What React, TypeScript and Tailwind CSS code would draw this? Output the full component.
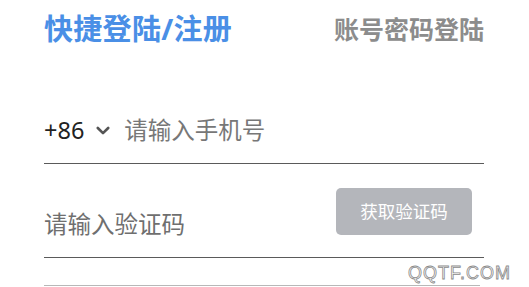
import React from 'react';

const font = 'font-["Noto_Sans","Noto_Sans_CJK_SC",sans-serif]';

function Chevron() {
  return (
    <svg width="14" height="10" viewBox="0 0 14 10" className="ml-[12px] mr-[14px] shrink-0">
      <path d="M1.8 2 L7 7.2 L12.2 2" fill="none" stroke="#555" strokeWidth="2.6" strokeLinecap="round" strokeLinejoin="round" />
    </svg>
  );
}

export default function App() {
  return (
    <div className={`relative w-[529px] h-[287px] overflow-hidden bg-white ${font}`}>
      <div className="ml-[44px] w-[440px]">
        {/* tabs */}
        <div className="flex items-end justify-between pt-[14px]">
          <span className="text-[29px] leading-none font-bold tracking-[0.3px] text-[#4a8fe6]">快捷登陆/注册</span>
          <span className="text-[25px] leading-none font-bold text-[#8c8c8c] mb-[1px]">账号密码登陆</span>
        </div>

        {/* phone */}
        <div className="flex items-center mt-[71px] pb-[16px] border-b border-[#5a5a5a]">
          <span className="text-[23.5px] leading-[33px] text-[#222]">+86</span>
          <Chevron />
          <span className="text-[23.5px] leading-[33px] text-[#777]">请输入手机号</span>
        </div>

        {/* code */}
        <div className="flex items-start justify-between pt-[24px] pb-[16px] border-b border-[#5a5a5a]">
          <span className="mt-[20px] text-[23.5px] leading-[33px] text-[#6f6f6f]">请输入验证码</span>
          <button className="mr-[12px] w-[136px] h-[47px] rounded-[5px] bg-[#b4b6bb] text-[17.5px] text-white">
            获取验证码
          </button>
        </div>

        <div className="h-[28px] w-[436px] border-b border-[#b8b8b8]" />
      </div>

      <span className='absolute left-[408px] top-[264px] text-[18px] leading-none tracking-[1px] text-white font-["Liberation_Sans",sans-serif] [-webkit-text-stroke:0.8px_#8a8a8a]'>
        QQTF.COM
      </span>
    </div>
  );
}
